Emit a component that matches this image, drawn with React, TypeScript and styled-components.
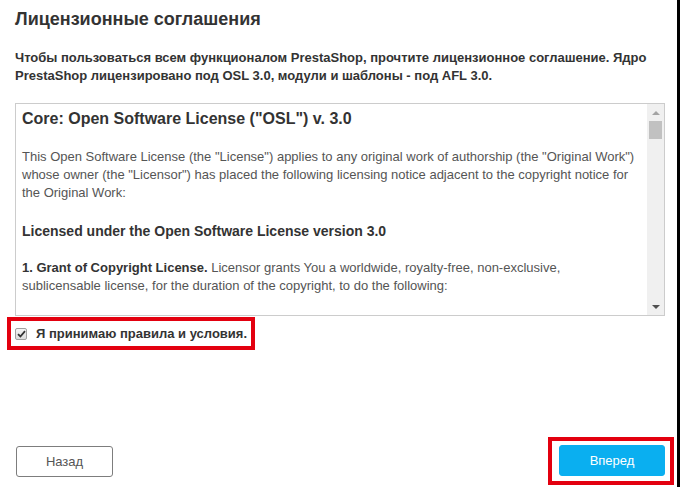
import React from "react";
import styled, { createGlobalStyle } from "styled-components";

const GlobalStyle = createGlobalStyle`
  html, body {
    margin: 0;
    padding: 0;
    background: #fff;
  }
  body {
    font-family: "Liberation Sans", Arial, sans-serif;
  }
`;

const Page = styled.div`
  box-sizing: border-box;
  width: 680px;
  height: 487px;
  padding: 8px 12px 2px 15px;
  border-right: 3px solid #000;
  display: flex;
  flex-direction: column;
  background: #fff;
`;

const Title = styled.h2`
  margin: 0 0 19px;
  font-size: 18px;
  line-height: 22px;
  font-weight: bold;
  color: #333;
`;

const Intro = styled.p`
  margin: 0 0 18px;
  font-size: 13px;
  line-height: 18px;
  font-weight: bold;
  color: #333;
`;

const LicenseBox = styled.div`
  box-sizing: border-box;
  height: 213px;
  width: 650px;
  border: 1px solid #ccc;
  display: flex;
`;

const LicenseText = styled.div`
  flex: 1;
  overflow: hidden;
  padding: 5px 6px;
  color: #555;
`;

const LicenseHeading = styled.h3`
  margin: 0 0 19px;
  font-size: 16px;
  line-height: 20px;
  font-weight: bold;
  color: #333;
`;

const LicenseSub = styled.h4`
  margin: 0 0 18px;
  font-size: 14px;
  line-height: 20px;
  font-weight: bold;
  color: #333;
`;

const LicensePara = styled.p`
  margin: 0 0 19px;
  font-size: 13px;
  line-height: 18px;

  b {
    color: #333;
  }
`;

const Scrollbar = styled.div`
  width: 17px;
  background: #f0f0f0;
  display: flex;
  flex-direction: column;
  align-items: center;
`;

const ArrowButton = styled.div<{ $dir: "up" | "down"; $disabled?: boolean }>`
  width: 17px;
  height: 17px;
  display: flex;
  align-items: center;
  justify-content: center;

  &::before {
    content: "";
    width: 0;
    height: 0;
    border-left: 4px solid transparent;
    border-right: 4px solid transparent;
    ${(p) =>
      p.$dir === "up"
        ? `border-bottom: 4px solid ${p.$disabled ? "#a3a3a3" : "#505050"};`
        : `border-top: 4px solid ${p.$disabled ? "#a3a3a3" : "#505050"};`}
  }
`;

const Track = styled.div`
  flex: 1;
  width: 13px;
`;

const Thumb = styled.div`
  width: 13px;
  height: 18px;
  background: #c1c1c1;
`;

const Highlight = styled.div`
  display: inline-flex;
  align-items: center;
  border: 4px solid #e3000f;
`;

const CheckRow = styled(Highlight)`
  align-self: flex-start;
  margin: 1px 0 0 -8px;
  height: 25px;
  padding: 0 4px 0 4px;
  gap: 9px;
`;

const CheckBox = styled.span`
  box-sizing: border-box;
  width: 12px;
  height: 12px;
  border: 1px solid #a0a0a0;
  border-radius: 2px;
  background: linear-gradient(#f4f4f4, #dcdcdc);
  display: flex;
  align-items: center;
  justify-content: center;
`;

const CheckLabel = styled.label`
  font-size: 13px;
  line-height: 16px;
  font-weight: bold;
  white-space: nowrap;
  color: #333;
`;

const Footer = styled.div`
  margin-top: auto;
  display: flex;
  justify-content: space-between;
  align-items: center;
  margin-right: -9px;
  padding-left: 1px;
`;

const Button = styled.button<{ $primary?: boolean }>`
  box-sizing: border-box;
  height: 31px;
  border-radius: 3px;
  font-family: "Liberation Sans", Arial, sans-serif;
  font-size: 13px;
  cursor: pointer;
  ${(p) =>
    p.$primary
      ? `
    width: 106px;
    background: #0aaff0;
    border: 1px solid #0aaff0;
    color: #fff;
  `
      : `
    width: 97px;
    background: #fff;
    border: 1px solid #7d7d7d;
    color: #555;
  `}
`;

const ButtonFrame = styled(Highlight)`
  padding: 4px 5px 5px 7px;
`;

export default function App() {
  return (
    <Page>
      <GlobalStyle />
      <Title>Лицензионные соглашения</Title>
      <Intro>
        Чтобы пользоваться всем функционалом PrestaShop, прочтите лицензионное
        соглашение. Ядро PrestaShop лицензировано под OSL 3.0, модули и шаблоны -
        под AFL 3.0.
      </Intro>
      <LicenseBox>
        <LicenseText>
          <LicenseHeading>Core: Open Software License ("OSL") v. 3.0</LicenseHeading>
          <LicensePara>
            This Open Software License (the "License") applies to any original work of
            authorship (the "Original Work") whose owner (the "Licensor") has placed the
            following licensing notice adjacent to the copyright notice for the Original
            Work:
          </LicensePara>
          <LicenseSub>Licensed under the Open Software License version 3.0</LicenseSub>
          <LicensePara>
            <b>1. Grant of Copyright License.</b> Licensor grants You a worldwide,
            royalty-free, non-exclusive, sublicensable license, for the duration of the
            copyright, to do the following:
          </LicensePara>
          <LicensePara>
            a) to reproduce the Original Work in copies, either alone or as part of a
            collective work;
          </LicensePara>
        </LicenseText>
        <Scrollbar>
          <ArrowButton $dir="up" $disabled />
          <Track>
            <Thumb />
          </Track>
          <ArrowButton $dir="down" />
        </Scrollbar>
      </LicenseBox>
      <CheckRow>
        <CheckBox>
          <svg width="9" height="8" viewBox="0 0 9 8">
            <path d="M1 4.2 L3.4 6.5 L8 1.2" fill="none" stroke="#333" strokeWidth="1.8" />
          </svg>
        </CheckBox>
        <CheckLabel>Я принимаю правила и условия.</CheckLabel>
      </CheckRow>
      <Footer>
        <Button>Назад</Button>
        <ButtonFrame>
          <Button $primary>Вперед</Button>
        </ButtonFrame>
      </Footer>
    </Page>
  );
}
